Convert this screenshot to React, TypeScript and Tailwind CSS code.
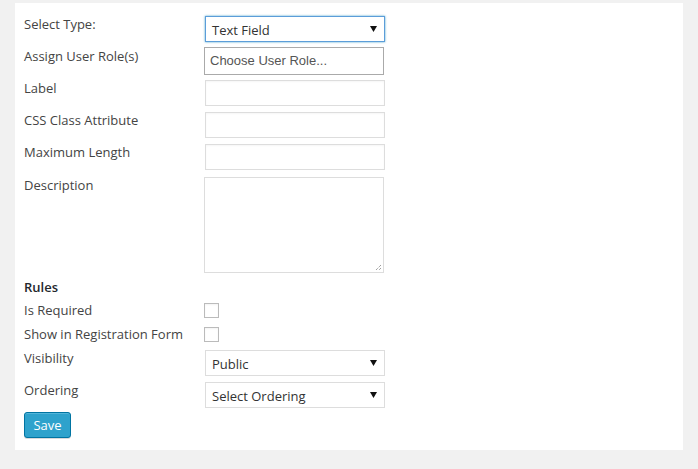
import React from 'react'

const labelCls = 'w-[181px] shrink-0 text-[13px] leading-4 text-[#444]'

function Arrow() {
  return (
    <svg width="7" height="6" viewBox="0 0 7 6" className="absolute right-[7px] top-[9px] text-[#111]">
      <path d="M0 0h7L3.5 6z" fill="currentColor" />
    </svg>
  )
}

function SelectBox({ value, focused }: { value: string; focused?: boolean }) {
  return (
    <div
      className={`relative w-[180px] h-[26px] bg-white border pl-[6px] text-[13px] leading-[24px] text-[#333] ${
        focused ? 'border-[#5b9dd9] shadow-[0_0_2px_rgba(30,140,190,0.8)]' : 'border-[#ddd]'
      }`}
    >
      <span className="relative top-[1px]">{value}</span>
      <Arrow />
    </div>
  )
}

function TextInput() {
  return <div className="w-[180px] h-[26px] bg-white border border-[#ddd] shadow-[inset_0_1px_2px_rgba(0,0,0,0.04)]" />
}

function Checkbox() {
  return <div className="w-[15px] h-[15px] ml-[-1px] bg-white border border-[#bbb] shadow-[inset_0_1px_2px_rgba(0,0,0,0.05)]" />
}

export default function App() {
  return (
    <div className="min-h-[469px] bg-[#f1f1f1] pt-[3px] pl-[15px] pr-[15px] font-['Open_Sans',sans-serif]">
      <div className="w-[668px] bg-white pt-[13px] pb-[12px] px-[9px]">
        {/* basic fields */}
        <div className="flex h-[26px] mb-[5px]">
          <div className={labelCls}>Select Type:</div>
          <SelectBox value="Text Field" focused />
        </div>
        <div className="flex h-[28px] mb-[5px]">
          <div className={`${labelCls} pt-[1px]`}>Assign User Role(s)</div>
          <div className="w-[180px] h-[28px] ml-[-1px] bg-white border border-[#aaa] pl-[5px] font-['Liberation_Sans',Arial,sans-serif] text-[13px] leading-[26px] text-[#555]">
            Choose User Role...
          </div>
        </div>
        <div className="flex h-[26px] mb-[6px]">
          <div className={labelCls}>Label</div>
          <TextInput />
        </div>
        <div className="flex h-[26px] mb-[6px]">
          <div className={labelCls}>CSS Class Attribute</div>
          <TextInput />
        </div>
        <div className="flex h-[26px] mb-[7px]">
          <div className={labelCls}>Maximum Length</div>
          <TextInput />
        </div>
        <div className="flex">
          <div className={labelCls}>Description</div>
          <div className="relative w-[180px] h-[96px] ml-[-1px] bg-white border border-[#ddd]">
            <svg width="7" height="7" viewBox="0 0 7 7" className="absolute right-[1px] bottom-[1px]">
              <path d="M6 1L1 6M6 4L4 6" stroke="#777" strokeWidth="1" strokeDasharray="1 1" />
            </svg>
          </div>
        </div>

        {/* rules */}
        <div className="mt-[4px] h-[20px] text-[13px] leading-[20px] font-semibold text-[#23282d]">Rules</div>
        <div className="mt-[1px] flex items-center h-[24px]">
          <div className={labelCls}>Is Required</div>
          <Checkbox />
        </div>
        <div className="flex items-center h-[24px] mb-[4px]">
          <div className={labelCls}>Show in Registration Form</div>
          <Checkbox />
        </div>
        <div className="flex h-[26px] mb-[6px]">
          <div className={labelCls}>Visibility</div>
          <SelectBox value="Public" />
        </div>
        <div className="flex h-[26px] mb-[4px]">
          <div className={labelCls}>Ordering</div>
          <SelectBox value="Select Ordering" />
        </div>
        <button className="w-[47px] h-[26px] rounded-[3px] bg-[#2ea2cc] border border-[#0074a2] shadow-[inset_0_1px_0_rgba(120,200,230,0.5),0_1px_0_rgba(0,0,0,0.15)] text-[13px] leading-[24px] text-white">
          Save
        </button>
      </div>
    </div>
  )
}
